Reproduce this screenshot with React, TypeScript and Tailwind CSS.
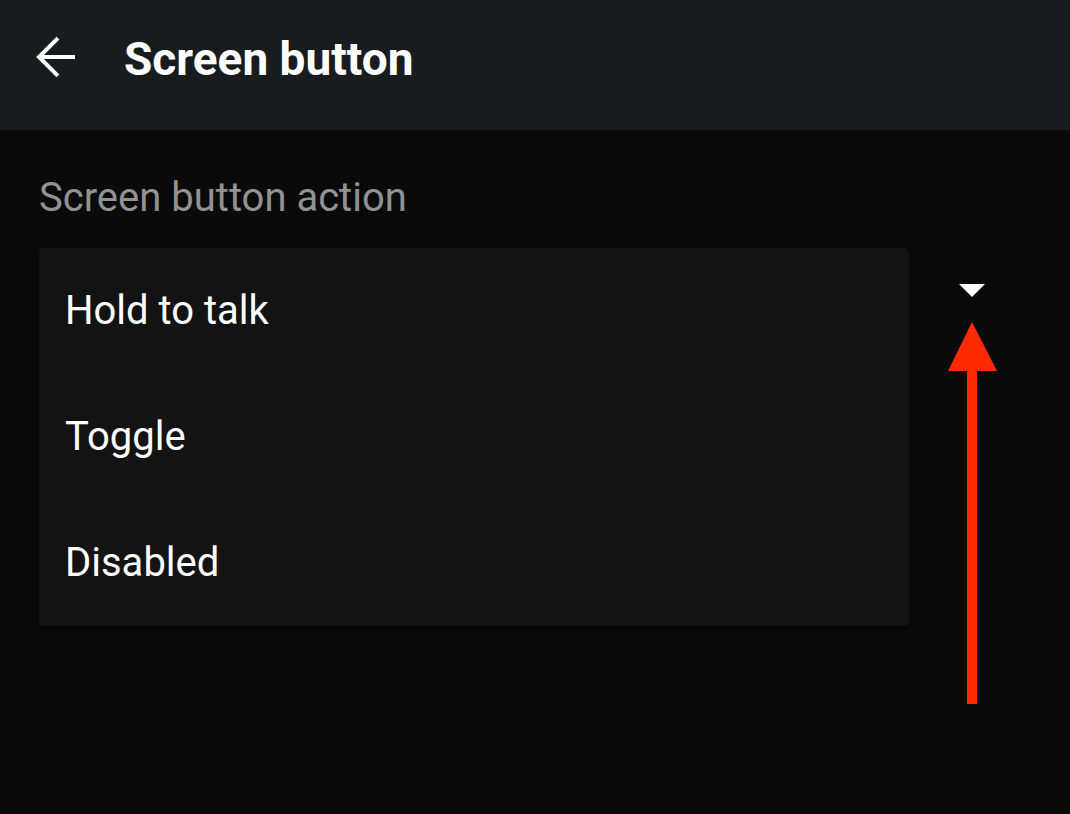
import React from "react";

export default function App() {
  const items = ["Hold to talk", "Toggle", "Disabled"];
  return (
    <div
      className="relative w-[1070px] h-[814px] bg-[#0a0a0a] overflow-hidden"
      style={{ fontFamily: "Roboto, 'Noto Sans', sans-serif" }}
    >
      <header className="h-[130px] bg-[#181c1f] flex items-start pt-[36px]">
        <div className="w-[124px] flex pl-[35px]">
          <svg width="42" height="42" viewBox="0 0 42 42" fill="none">
            <path d="M40 21H4" stroke="white" strokeWidth="4" />
            <path d="M21.5 3.5L4 21L21.5 38.5" stroke="white" strokeWidth="4" strokeLinecap="square" />
          </svg>
        </div>
        <h1 className="text-white font-bold text-[46px] leading-none">
          Screen button
        </h1>
      </header>

      <main className="pl-[39px] pt-[46px]">
        <div className="text-[#929292] text-[40px] leading-[44px]">
          Screen button action
        </div>
        <div className="flex mt-[28px]">
          <div className="w-[870px] bg-[#131313] rounded-[5px] shadow-[0_2px_6px_rgba(0,0,0,0.5)]">
            {items.map((t) => (
              <div key={t} className="h-[126px] flex items-center pl-[26px] text-white text-[40px]">
                {t}
              </div>
            ))}
          </div>
          <div className="ml-[50px] pt-[36px]">
            <svg width="26" height="13" viewBox="0 0 26 13">
              <path d="M0 0H26L13 13Z" fill="white" />
            </svg>
          </div>
        </div>
      </main>

      <svg
        className="absolute left-[946px] top-[320px]"
        width="54"
        height="388"
        viewBox="0 0 54 388"
      >
        <path d="M26 2L51 51H2Z" fill="#ff2a00" />
        <rect x="21" y="50" width="10" height="334" fill="#ff2a00" />
      </svg>
    </div>
  );
}
